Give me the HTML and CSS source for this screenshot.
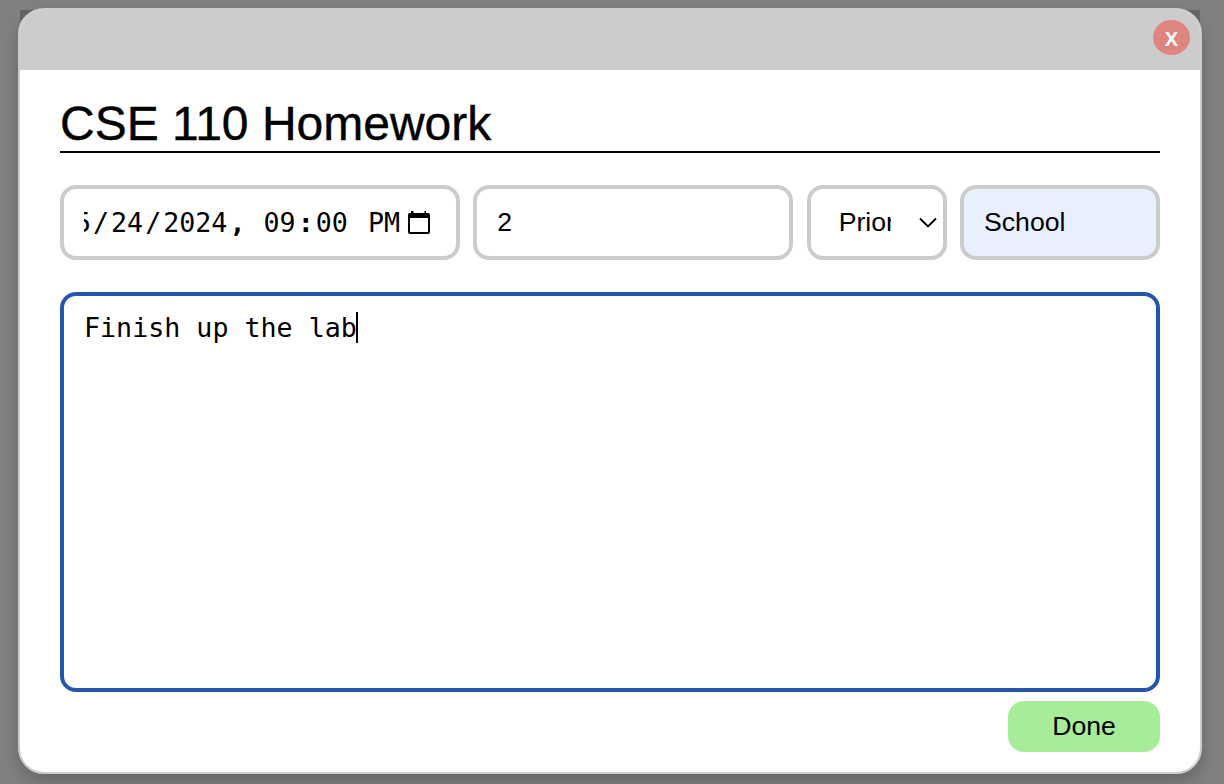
FILE: index.html
```html
<!DOCTYPE html>
<html lang="en">
<head>
<meta charset="utf-8">
<title>Task</title>
<link rel="stylesheet" href="styles.css">
</head>
<body>
<main class="modal">
  <header class="modal-header"><button class="close">X</button></header>
  <div class="content">
    <h1 class="title">CSE 110 Homework</h1>
    <div class="fields">
      <div class="field date">
        <div class="date-text"><div><span class="part">05</span>/<span class="part">24</span>/<span class="part">2024</span><b>,</b> <span class="part">09</span><b>:</b><span class="part">00</span> <span class="part">PM</span></div></div>
        <svg class="calendar" width="22" height="24" viewBox="0 0 22 24"><path fill="#000" fill-rule="evenodd" d="M3 0h2.500v2h11V0H18v2h2q2 0 2 2v17q0 2-2 2H2q-2 0-2-2V4q0-2 2-2h1zM2 7v14h18V7z"/></svg>
      </div>
      <div class="field duration">2</div>
      <div class="field priority"><span class="priority-text">Priority</span>
        <svg width="18" height="12" viewBox="0 0 18 12"><path d="M1 1.500L9 9.500L17 1.500" fill="none" stroke="#000" stroke-width="1.900"/></svg>
      </div>
      <div class="field label">School</div>
    </div>
    <div class="notes">Finish up the lab<span class="caret"></span></div>
    <button class="done">Done</button>
  </div>
</main>
</body>
</html>
```
FILE: styles.css
```css
* { box-sizing: border-box; }
body {
  margin: 0;
  height: 784px;
  padding: 8px 22px 10px 18px;
  overflow: hidden;
  background: #808080;
  font-family: "Liberation Sans", Arial, sans-serif;
  font-size: 26.67px;
  color: #000;
}
/* square corners of the bar behind the rounded dialog */
body::before {
  content: "";
  position: absolute;
  top: 10px;
  left: 20px;
  width: 1180px;
  height: 30px;
  background: #666;
}
.modal {
  position: relative;
  height: 766px;
  border: 2px solid #ccc;
  border-radius: 26px;
  background: #fff;
  box-shadow: 0 8px 16px rgba(0, 0, 0, .2);
}
.modal-header {
  display: flex;
  justify-content: flex-end;
  height: 60px;
  padding: 10px 10px 0 0;
  border-radius: 23px 23px 0 0;
  background: #ccc;
}
.close {
  width: 37px;
  height: 35px;
  padding: 3px 0 0;
  border: 0;
  border-radius: 50%;
  background: #de8580;
  color: #fff;
  font: bold 20px/32px "Liberation Sans", Arial, sans-serif;
}
.content {
  display: flex;
  flex-direction: column;
  padding: 24px 40px 0;
}
.title {
  height: 59px;
  margin: 0 0 32px;
  border-bottom: 2px solid #000;
  font-size: 48px;
  font-weight: 400;
  line-height: 60px;
  -webkit-text-stroke: .4px #000;
}
.fields {
  display: flex;
  justify-content: space-between;
  margin-bottom: 32px;
}
.field {
  display: flex;
  align-items: center;
  height: 75px;
  padding: 0 20px 1px;
  border: 4px solid #ccc;
  border-radius: 16px;
}
.date {
  width: 400px;
  gap: 8px;
  padding-bottom: 0;
  font-family: "DejaVu Sans Mono", monospace;
}
.date-text {
  display: flex;
  justify-content: flex-end;
  width: 316px;
  overflow: hidden;
  white-space: pre;
}
.part { padding: 0 2px; }
.part:last-child { padding-right: 0; }
.calendar { flex: none; }
.duration { width: 320px; }
.priority {
  width: 140px;
  justify-content: space-between;
  padding: 0 6px 0 28px;
}
.priority-text { width: 52px; overflow: hidden; }
.label { width: 200px; background: #e8f0fe; }
.notes {
  display: flex;
  align-items: flex-start;
  height: 400px;
  padding: 16px 20px;
  border: 4px solid #2355ae;
  border-radius: 16px;
  font-family: "DejaVu Sans Mono", monospace;
  line-height: 31px;
}
.caret { width: 2px; height: 31px; margin-left: -1px; background: #000; }
.done {
  align-self: flex-end;
  width: 152px;
  height: 51px;
  margin-top: 9px;
  padding: 0;
  border: 0;
  border-radius: 16px;
  background: #a7ed99;
  color: #000;
  font: 26.67px "Liberation Sans", Arial, sans-serif;
}
```
